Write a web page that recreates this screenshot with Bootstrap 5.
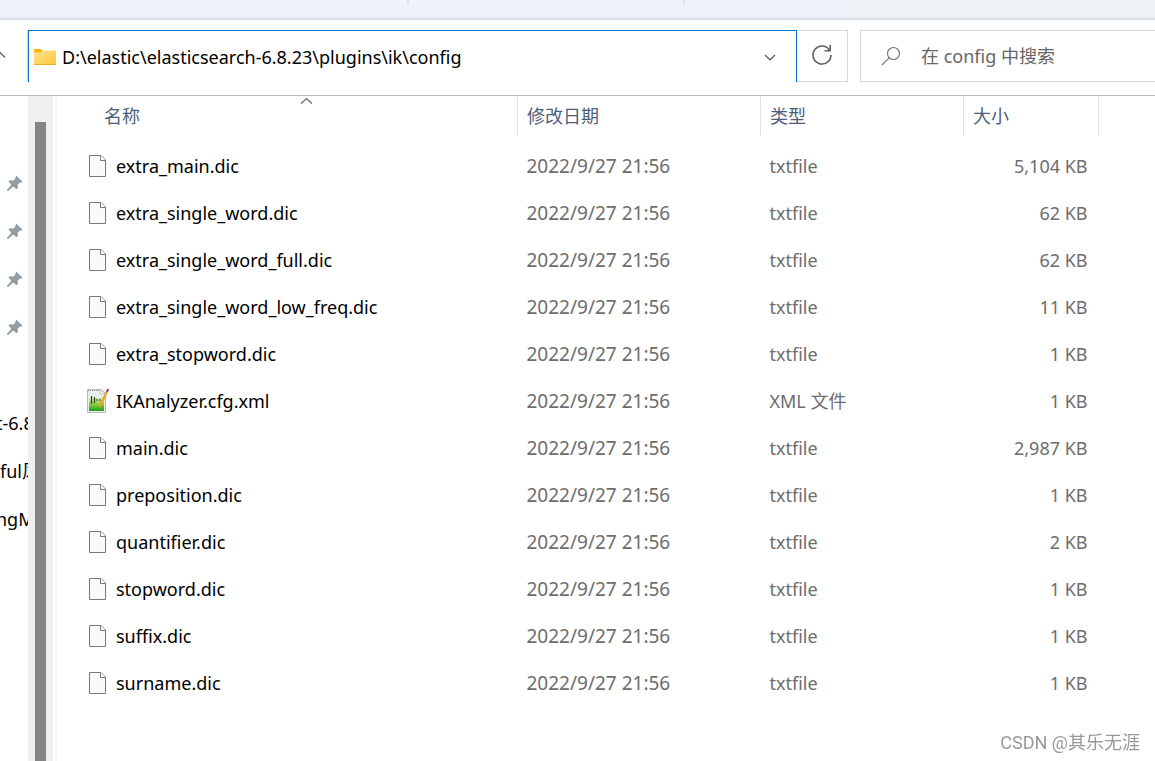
<!DOCTYPE html>
<html lang="zh-CN">
<head>
<meta charset="utf-8">
<meta name="viewport" content="width=device-width, initial-scale=1">
<title>config</title>
<link href="https://cdn.jsdelivr.net/npm/bootstrap@5.3.0/dist/css/bootstrap.min.css" rel="stylesheet">
<style>
  body { font-family: "Noto Sans", "Noto Sans CJK SC", sans-serif; font-size: 18px; line-height: 24px; color: #000; background: #fff; }
  .tab-strip { height: 20px; background: linear-gradient(90deg, #eef3fb 60%, #edf2f7 75%); border-bottom: 2px solid #dcdfe2; }
  .tab-strip span { height: 4px; border-right: 2px solid #dfe3e9; }
  .tab-a { width: 409px; }
  .tab-b { width: 276px; }
  .address-bar { height: 76px; padding: 10px 0 13px; border-bottom: 1px solid #bcbcbc; }
  .up-btn { width: 27px; }
  .path-box { border: 1px solid #0078d7; border-bottom: 0; box-shadow: -1px 0 #c5dcf0; padding-left: 5px; margin-left: 1px; gap: 6px; }
  .path-box input, .search-box input { outline: 0; min-width: 0; }
  .drop-btn { width: 52px; }
  .refresh-btn { width: 51px; border: 1px solid #d9d9d9; border-left: 0; }
  .search-box { width: 295px; margin-left: 12px; border: 1px solid #d9d9d9; border-right: 0; padding-left: 20px; gap: 20px; }
  .search-box input, .search-box input::placeholder { color: #666; opacity: 1; }
  .side-pane { width: 28px; padding-top: 63px; }
  .side-pane a { height: 48px; color: #000; white-space: nowrap; }
  .pin-link { padding-left: 7px; }
  .cut-link { margin-left: -4px; }
  .scroll-track { width: 25px; padding: 26px 7px 0; background: #efefef; }
  .scroll-thumb { background: #858585; }
  .splitter { width: 2px; margin-left: 2px; background: #f7f7f7; }
  .file-pane { padding-right: 56px; }
  .file-list { table-layout: fixed; }
  .file-list th { position: relative; height: 40px; padding: 0 0 0 9px; font-weight: 400; color: #4c607a; border-right: 1px solid #e2e2e2; }
  .file-list th:first-child { padding-left: 47px; }
  .file-list td { height: 47px; padding: 0 0 0 9px; vertical-align: middle; color: #6d6d6d; }
  .file-list td:first-child { padding-left: 29px; color: #000; }
  .file-list td:nth-child(2) { font-size: 19px; }
  .file-list td:last-child { padding-right: 11px; text-align: right; }
  .file-list tbody::before { content: ""; display: block; height: 6px; }
  .file-name { gap: 7px; }
  .sort-mark { position: absolute; top: 1px; left: 243px; }
  .col-date { width: 243px; }
  .col-type { width: 203px; }
  .col-size { width: 135px; }
  .site-mark { position: fixed; right: 15px; bottom: 6px; font-family: Roboto, "Noto Sans CJK SC", sans-serif; color: #999; }
</style>
</head>
<body class="d-flex flex-column vh-100 overflow-hidden">
<svg class="d-none">
  <symbol id="i-file" viewBox="0 0 23 24"><path d="M3.500 1.500h11.500l4.500 4.500v16.500h-16z" fill="#fafafa" stroke="#777"/><path d="M14.500 1.500v5h5" fill="#fff" stroke="#777"/></symbol>
  <symbol id="i-xml" viewBox="0 0 23 24">
    <path d="M1.500.5h14l4 4v19h-18z" fill="#e8eef0" stroke="#b5babd"/><path d="M3 8h15v14H3z" fill="url(#leaf)"/>
    <path d="M2 1.500h12" stroke="#8a8f92" stroke-dasharray="1 1"/><path d="M14 1l5 4h-5z" fill="#fff" stroke="#aaa" stroke-width=".6"/>
    <path d="M5.500 7v8M8.500 8v6M10 11h2M13 11h2" stroke="#2c3b22" stroke-width="1.200"/>
    <path d="M21 2.500L15 15l-1.500 3" fill="none" stroke="#e9a820" stroke-width="2.200"/><path d="M20.800 3l1.500-3" stroke="#a34a4a" stroke-width="2.200"/>
  </symbol>
  <symbol id="i-pin" viewBox="0 0 16 16"><path d="M9 0.500l6.500 6-1.500 1.200-1.300-.2-2 2.200.2 3.300-1.400 1.300-3.300-2.700L1.500 15.800 0 16l.3-1.500 4-4.800L1.500 6.500l1.400-1.300 3.600.2 2-2.200z" fill="#929da4"/></symbol>
</svg>
<svg class="position-absolute" width="0" height="0"><defs>
  <linearGradient id="leaf" x1="0" y1="0" x2="0" y2="1"><stop offset="0" stop-color="#e4f2cf"/><stop offset=".5" stop-color="#8cd03c"/><stop offset="1" stop-color="#1f9a1c"/></linearGradient>
  <linearGradient id="gold" x1="0" y1="0" x2="1" y2="1"><stop offset="0" stop-color="#ffe592"/><stop offset="1" stop-color="#ffc83a"/></linearGradient>
</defs></svg>

<div class="tab-strip d-flex flex-shrink-0"><span class="tab-a"></span><span class="tab-b"></span></div>

<div class="address-bar d-flex flex-shrink-0">
  <button class="up-btn btn p-0 border-0 rounded-0 d-flex align-items-center" type="button" aria-label="向上"><svg width="6" height="14" viewBox="0 0 6 14" fill="none" stroke="#666" stroke-width="1.500"><path d="M-1 2.500l6 6"/></svg></button>
  <div class="path-box d-flex align-items-center flex-grow-1">
    <svg class="flex-shrink-0" width="22" height="18" viewBox="0 0 22 18"><path d="M0 1h7l2 2v4H0z" fill="#fbb615"/><path d="M0 4.500h7l2-2h13V17H0z" fill="url(#gold)"/><path d="M0 16.500h22" stroke="#eeb02c"/></svg>
    <input class="border-0 bg-transparent flex-grow-1 p-0" type="text" aria-label="地址" value="D:\elastic\elasticsearch-6.8.23\plugins\ik\config">
    <button class="drop-btn btn p-0 border-0 rounded-0" type="button" aria-label="历史记录"><svg width="12" height="8" viewBox="0 0 12 8" fill="none" stroke="#555" stroke-width="1.200"><path d="M1 1l5 5 5-5"/></svg></button>
  </div>
  <button class="refresh-btn btn p-0 pb-1 rounded-0" type="button" aria-label="刷新"><svg width="22" height="22" viewBox="0 0 22 22" fill="none" stroke="#606060" stroke-width="1.600"><path d="M18.800 6.500A9 9 0 1 0 20 11"/><path d="M19.200 1v5.700h-5.700"/></svg></button>
  <div class="search-box d-flex align-items-center">
    <svg class="flex-shrink-0" width="20" height="20" viewBox="0 0 20 20" fill="none" stroke="#777" stroke-width="1.200"><circle cx="12.500" cy="7.500" r="6"/><path d="M8.300 11.700L1 19"/></svg>
    <input class="border-0 bg-transparent flex-grow-1 p-0" type="text" aria-label="搜索" placeholder="在 config 中搜索">
  </div>
</div>

<div class="d-flex flex-grow-1 overflow-hidden">
  <nav class="side-pane flex-shrink-0 overflow-hidden d-flex flex-column" aria-label="导航窗格">
    <a href="#" class="pin-link d-flex align-items-center" aria-label="已固定 1"><svg width="16" height="16"><use href="#i-pin"/></svg></a>
    <a href="#" class="pin-link d-flex align-items-center" aria-label="已固定 2"><svg width="16" height="16"><use href="#i-pin"/></svg></a>
    <a href="#" class="pin-link d-flex align-items-center" aria-label="已固定 3"><svg width="16" height="16"><use href="#i-pin"/></svg></a>
    <a href="#" class="pin-link d-flex align-items-center mb-5" aria-label="已固定 4"><svg width="16" height="16"><use href="#i-pin"/></svg></a>
    <a href="#" class="cut-link d-flex align-items-center text-decoration-none">t-6.8</a>
    <a href="#" class="d-flex align-items-center text-decoration-none">ful风</a>
    <a href="#" class="cut-link d-flex align-items-center text-decoration-none">ngM</a>
  </nav>
  <div class="scroll-track flex-shrink-0 d-flex"><div class="scroll-thumb flex-grow-1"></div></div>
  <div class="splitter flex-shrink-0"></div>
  <main class="file-pane flex-grow-1">
    <table class="file-list table table-borderless m-0">
      <colgroup><col><col class="col-date"><col class="col-type"><col class="col-size"></colgroup>
      <thead><tr><th scope="col" class="align-middle">名称<svg class="sort-mark" width="13" height="8" viewBox="0 0 13 8" fill="none" stroke="#666" stroke-width="1.200"><path d="M1 6.500l5.500-5 5.500 5"/></svg></th><th scope="col" class="align-middle">修改日期</th><th scope="col" class="align-middle">类型</th><th scope="col" class="align-middle">大小</th></tr></thead>
      <tbody>
        <tr><td><div class="file-name d-flex align-items-center"><svg width="23" height="24"><use href="#i-file"/></svg>extra_main.dic</div></td><td>2022/9/27 21:56</td><td>txtfile</td><td>5,104 KB</td></tr>
        <tr><td><div class="file-name d-flex align-items-center"><svg width="23" height="24"><use href="#i-file"/></svg>extra_single_word.dic</div></td><td>2022/9/27 21:56</td><td>txtfile</td><td>62 KB</td></tr>
        <tr><td><div class="file-name d-flex align-items-center"><svg width="23" height="24"><use href="#i-file"/></svg>extra_single_word_full.dic</div></td><td>2022/9/27 21:56</td><td>txtfile</td><td>62 KB</td></tr>
        <tr><td><div class="file-name d-flex align-items-center"><svg width="23" height="24"><use href="#i-file"/></svg>extra_single_word_low_freq.dic</div></td><td>2022/9/27 21:56</td><td>txtfile</td><td>11 KB</td></tr>
        <tr><td><div class="file-name d-flex align-items-center"><svg width="23" height="24"><use href="#i-file"/></svg>extra_stopword.dic</div></td><td>2022/9/27 21:56</td><td>txtfile</td><td>1 KB</td></tr>
        <tr><td><div class="file-name d-flex align-items-center"><svg width="23" height="24"><use href="#i-xml"/></svg>IKAnalyzer.cfg.xml</div></td><td>2022/9/27 21:56</td><td>XML 文件</td><td>1 KB</td></tr>
        <tr><td><div class="file-name d-flex align-items-center"><svg width="23" height="24"><use href="#i-file"/></svg>main.dic</div></td><td>2022/9/27 21:56</td><td>txtfile</td><td>2,987 KB</td></tr>
        <tr><td><div class="file-name d-flex align-items-center"><svg width="23" height="24"><use href="#i-file"/></svg>preposition.dic</div></td><td>2022/9/27 21:56</td><td>txtfile</td><td>1 KB</td></tr>
        <tr><td><div class="file-name d-flex align-items-center"><svg width="23" height="24"><use href="#i-file"/></svg>quantifier.dic</div></td><td>2022/9/27 21:56</td><td>txtfile</td><td>2 KB</td></tr>
        <tr><td><div class="file-name d-flex align-items-center"><svg width="23" height="24"><use href="#i-file"/></svg>stopword.dic</div></td><td>2022/9/27 21:56</td><td>txtfile</td><td>1 KB</td></tr>
        <tr><td><div class="file-name d-flex align-items-center"><svg width="23" height="24"><use href="#i-file"/></svg>suffix.dic</div></td><td>2022/9/27 21:56</td><td>txtfile</td><td>1 KB</td></tr>
        <tr><td><div class="file-name d-flex align-items-center"><svg width="23" height="24"><use href="#i-file"/></svg>surname.dic</div></td><td>2022/9/27 21:56</td><td>txtfile</td><td>1 KB</td></tr>
      </tbody>
    </table>
  </main>
</div>
<div class="site-mark">CSDN @其乐无涯</div>
<script src="https://cdn.jsdelivr.net/npm/bootstrap@5.3.0/dist/js/bootstrap.bundle.min.js"></script>
</body>
</html>
